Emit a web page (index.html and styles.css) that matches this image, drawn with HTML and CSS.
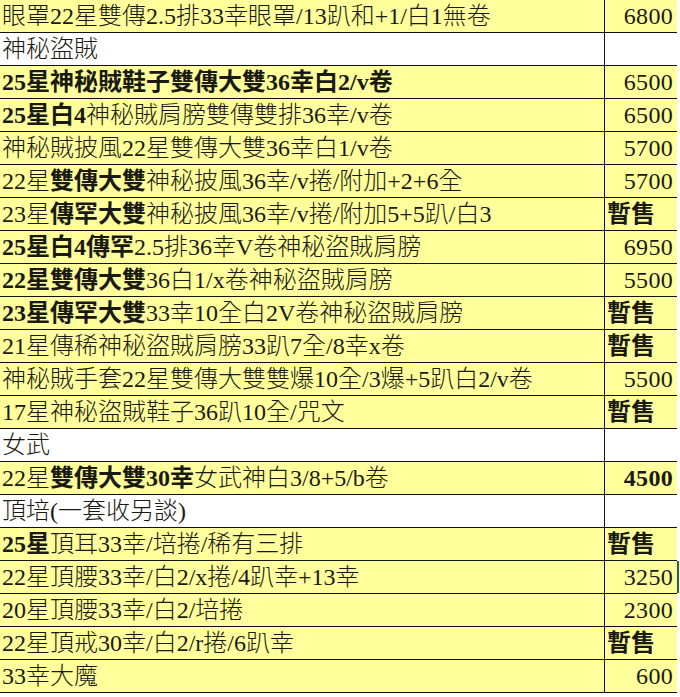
FILE: index.html
```html
<!DOCTYPE html>
<html lang="zh-Hant">
<head>
<meta charset="utf-8">
<title>價目表</title>
<link rel="stylesheet" href="styles.css">
</head>
<body>
<div class="sheet">
  <div class="row"><div class="item">眼罩22星雙傳2.5排33幸眼罩/13趴和+1/白1無卷</div><div class="price">6800</div></div>
  <div class="row blank"><div class="item">神秘盜賊</div><div class="price"></div></div>
  <div class="row"><div class="item"><b>25星神秘賊鞋子雙傳大雙36幸白2/v卷</b></div><div class="price">6500</div></div>
  <div class="row"><div class="item"><b>25星白4</b>神秘賊肩膀雙傳雙排36幸/v卷</div><div class="price">6500</div></div>
  <div class="row"><div class="item">神秘賊披風22星雙傳大雙36幸白1/v卷</div><div class="price">5700</div></div>
  <div class="row"><div class="item">22星<b>雙傳大雙</b>神秘披風36幸/v捲/附加+2+6全</div><div class="price">5700</div></div>
  <div class="row"><div class="item">23星<b>傳罕大雙</b>神秘披風36幸/v捲/附加5+5趴/白3</div><div class="price hold">暫售</div></div>
  <div class="row"><div class="item"><b>25星白4傳罕</b>2.5排36幸V卷神秘盜賊肩膀</div><div class="price">6950</div></div>
  <div class="row"><div class="item"><b>22星雙傳大雙</b>36白1/x卷神秘盜賊肩膀</div><div class="price">5500</div></div>
  <div class="row"><div class="item"><b>23星傳罕大雙</b>33幸10全白2V卷神秘盜賊肩膀</div><div class="price hold">暫售</div></div>
  <div class="row"><div class="item">21星傳稀神秘盜賊肩膀33趴7全/8幸x卷</div><div class="price hold">暫售</div></div>
  <div class="row"><div class="item">神秘賊手套22星雙傳大雙雙爆10全/3爆+5趴白2/v卷</div><div class="price">5500</div></div>
  <div class="row"><div class="item">17星神秘盜賊鞋子36趴10全/咒文</div><div class="price hold">暫售</div></div>
  <div class="row blank"><div class="item">女武</div><div class="price"></div></div>
  <div class="row"><div class="item">22星<b>雙傳大雙30幸</b>女武神白3/8+5/b卷</div><div class="price strong">4500</div></div>
  <div class="row blank"><div class="item">頂培(一套收另談)</div><div class="price"></div></div>
  <div class="row"><div class="item"><b>25星</b>頂耳33幸/培捲/稀有三排</div><div class="price hold">暫售</div></div>
  <div class="row"><div class="item">22星頂腰33幸/白2/x捲/4趴幸+13幸</div><div class="price selected">3250</div></div>
  <div class="row"><div class="item">20星頂腰33幸/白2/培捲</div><div class="price">2300</div></div>
  <div class="row"><div class="item">22星頂戒30幸/白2/r捲/6趴幸</div><div class="price hold">暫售</div></div>
  <div class="row"><div class="item">33幸大魔</div><div class="price">600</div></div>
</div>
</body>
</html>
```

FILE: styles.css
```css
html, body {
  margin: 0;
  padding: 0;
  background: #ffffff;
}

body {
  font-family: "Liberation Serif", "Noto Sans CJK TC", serif;
  font-size: 24px;
  color: #1a1a12;
}

.sheet {
  width: 677px;
  display: flex;
  flex-direction: column;
}

.row {
  display: grid;
  grid-template-columns: 605px 72px;
  height: 33px;
  box-sizing: border-box;
  border-bottom: 1px solid #111;
  background: #ffff9c;
}

.row.blank {
  background: #ffffff;
}

.item,
.price {
  display: flex;
  align-items: center;
  height: 32px;
  line-height: 32px;
  white-space: nowrap;
  font-weight: 300;
  overflow: hidden;
}

.item {
  padding-left: 2px;
  border-right: 1px solid #111;
}

.item b {
  font-weight: 700;
}

.price {
  justify-content: flex-end;
  padding-right: 4px;
  letter-spacing: 0.3px;
}

.price.hold {
  justify-content: flex-start;
  padding-left: 2px;
  font-weight: 700;
  letter-spacing: 0;
}

.price.strong {
  font-weight: 700;
}

.price.selected {
  box-shadow: 2px 0 0 #1f6b3f;
}
```
